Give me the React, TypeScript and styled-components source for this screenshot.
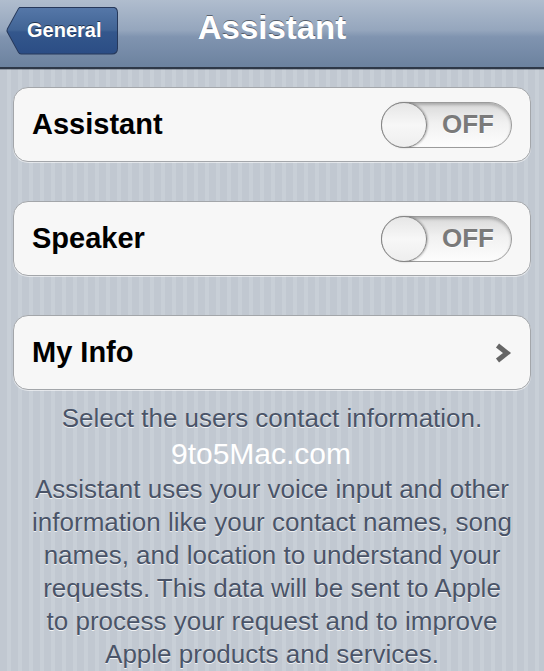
import React, { FC } from 'react';
import styled, { createGlobalStyle } from 'styled-components';

const GlobalStyle = createGlobalStyle`
  html, body {
    margin: 0;
    padding: 0;
  }
  body {
    width: 544px;
    height: 671px;
    overflow: hidden;
    font-family: 'Liberation Sans', Helvetica, Arial, sans-serif;
    background: repeating-linear-gradient(
      90deg,
      #c1c8d1 0px,
      #c1c8d1 7px,
      #c8cfd7 7px,
      #c8cfd7 11px
    );
  }
`;

const Screen = styled.div`
  width: 544px;
  height: 671px;
  display: flex;
  flex-direction: column;
`;

const NavBar = styled.header`
  box-sizing: border-box;
  height: 70px;
  padding: 0 6px 6px;
  display: grid;
  grid-template-columns: 1fr auto 1fr;
  align-items: center;
  background: linear-gradient(#b0bdce 0%, #95a6bd 45%, #8094b0 55%, #6c829f 100%);
  border-bottom: 2px solid #2e3848;
  box-shadow: 0 1px 0 rgba(60, 70, 85, 0.35);
`;

const BackOuter = styled.div`
  justify-self: start;
  width: 112px;
  height: 48px;
  padding: 1px;
  box-sizing: border-box;
  background: #26385a;
  clip-path: path('M15 0H106Q112 0 112 6V42Q112 48 106 48H15Q13 48 12 46L1 26Q0 24 1 22L12 2Q13 0 15 0Z');
`;

const BackInner = styled.button`
  width: 110px;
  height: 46px;
  border: none;
  padding: 0 0 0 20px;
  display: flex;
  align-items: center;
  background: linear-gradient(#5577a8 0%, #416495 48%, #34578c 52%, #2b4d85 100%);
  clip-path: path('M14 0H104Q110 0 110 5V41Q110 46 104 46H14Q12.5 46 11.6 44.3L0.9 24.6Q0 23 0.9 21.4L11.6 1.7Q12.5 0 14 0Z');
  color: #fff;
  font-family: 'Liberation Sans', Helvetica, Arial, sans-serif;
  font-size: 20px;
  font-weight: bold;
  text-shadow: 0 -1px 0 rgba(0, 0, 0, 0.5);
`;

const Title = styled.h1`
  margin: 0;
  padding-bottom: 5px;
  font-size: 33px;
  line-height: 32px;
  font-weight: bold;
  color: #fff;
  text-shadow: 0 -1px 0 rgba(0, 0, 0, 0.45);
`;

const Groups = styled.div`
  margin-top: 18px;
  padding: 0 13px;
  display: flex;
  flex-direction: column;
  gap: 39px;
`;

const Cell = styled.div`
  box-sizing: border-box;
  height: 75px;
  padding: 0 18px;
  display: flex;
  align-items: center;
  justify-content: space-between;
  background: #f7f7f7;
  border: 1px solid #a3a6aa;
  border-radius: 15px;
  box-shadow: 0 1px 0 rgba(255, 255, 255, 0.55);
`;

const Label = styled.span`
  font-size: 29px;
  font-weight: bold;
  color: #000;
`;

const Track = styled.div`
  box-sizing: border-box;
  width: 131px;
  height: 46px;
  display: flex;
  align-items: center;
  border: 1px solid #9b9b9b;
  border-radius: 23px;
  background: linear-gradient(#d9d9d9 0%, #f1f1f1 45%, #fdfdfd 100%);
  box-shadow: inset 0 2px 3px rgba(0, 0, 0, 0.22);
`;

const Knob = styled.div`
  box-sizing: border-box;
  flex: none;
  width: 46px;
  height: 46px;
  margin-left: -1px;
  border-radius: 50%;
  border: 1px solid #858585;
  background: linear-gradient(#e6e6e6 0%, #f7f7f7 50%, #eeeeee 100%);
  box-shadow: 1px 0 2px rgba(0, 0, 0, 0.25);
`;

const SwitchText = styled.span`
  flex: 1;
  text-align: center;
  padding-right: 2px;
  font-size: 26px;
  font-weight: bold;
  color: #7a7a7a;
  text-shadow: 0 1px 0 #fff;
`;

const Footer = styled.div`
  margin-top: 12px;
  text-align: center;
  color: #4a5468;
  font-size: 26px;
  line-height: 33px;
  text-shadow: 0 1px 0 rgba(255, 255, 255, 0.75);
`;

const Watermark = styled.div`
  margin-right: 22px;
  color: #fff;
  font-size: 30px;
  line-height: 38px;
  text-shadow: none;
`;

const Switch: FC<{ on?: boolean }> = ({ on }) => (
  <Track>
    <Knob />
    <SwitchText>{on ? 'ON' : 'OFF'}</SwitchText>
  </Track>
);

const Chevron = () => (
  <svg width="18" height="22" viewBox="0 0 18 22">
    <path d="M3.5 3.5L13 11L3.5 18.5" fill="none" stroke="#666" strokeWidth="5" />
  </svg>
);

const App: FC = () => (
  <Screen>
    <GlobalStyle />
    <NavBar>
      <BackOuter>
        <BackInner>General</BackInner>
      </BackOuter>
      <Title>Assistant</Title>
      <div />
    </NavBar>
    <Groups>
      <Cell>
        <Label>Assistant</Label>
        <Switch />
      </Cell>
      <Cell>
        <Label>Speaker</Label>
        <Switch />
      </Cell>
      <Cell>
        <Label>My Info</Label>
        <Chevron />
      </Cell>
    </Groups>
    <Footer>
      <div>Select the users contact information.</div>
      <Watermark>9to5Mac.com</Watermark>
      <div>
        Assistant uses your voice input and other
        <br />
        information like your contact names, song
        <br />
        names, and location to understand your
        <br />
        requests. This data will be sent to Apple
        <br />
        to process your request and to improve
        <br />
        Apple products and services.
      </div>
    </Footer>
  </Screen>
);

export default App;
